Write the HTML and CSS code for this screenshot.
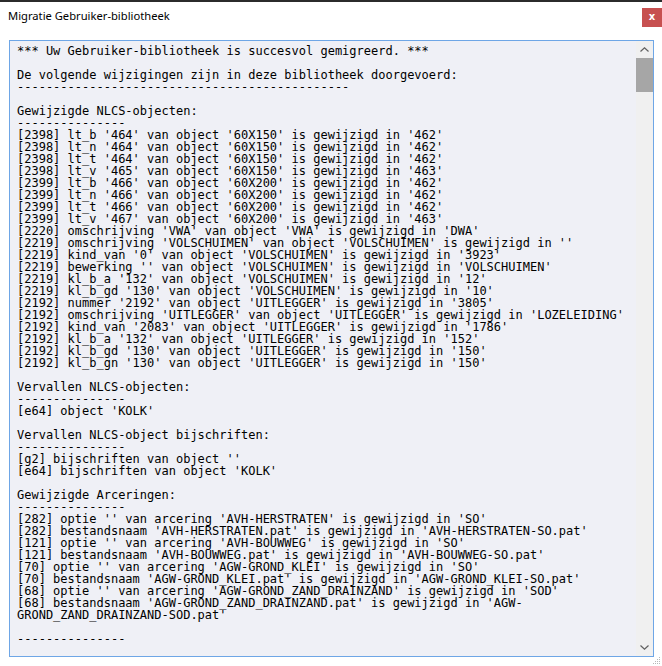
FILE: index.html
```
<!DOCTYPE html>
<html>
<head>
	<title>Migratie Gebruiker-bibliotheek</title>
	<link rel="stylesheet" href="styles.css">
</head>
<body>

	<div class="window">
		<div class="titlebar">
			<div class="title">Migratie Gebruiker-bibliotheek</div>
			<div class="close">x</div>
		</div>

		<div class="log_box">
			<pre class="log_text">*** Uw Gebruiker-bibliotheek is succesvol gemigreerd. ***

De volgende wijzigingen zijn in deze bibliotheek doorgevoerd:
----------------------------------------------

Gewijzigde NLCS-objecten:
---------------
[2398] lt_b '464' van object '60X150' is gewijzigd in '462'
[2398] lt_n '464' van object '60X150' is gewijzigd in '462'
[2398] lt_t '464' van object '60X150' is gewijzigd in '462'
[2398] lt_v '465' van object '60X150' is gewijzigd in '463'
[2399] lt_b '466' van object '60X200' is gewijzigd in '462'
[2399] lt_n '466' van object '60X200' is gewijzigd in '462'
[2399] lt_t '466' van object '60X200' is gewijzigd in '462'
[2399] lt_v '467' van object '60X200' is gewijzigd in '463'
[2220] omschrijving 'VWA' van object 'VWA' is gewijzigd in 'DWA'
[2219] omschrijving 'VOLSCHUIMEN' van object 'VOLSCHUIMEN' is gewijzigd in ''
[2219] kind_van '0' van object 'VOLSCHUIMEN' is gewijzigd in '3923'
[2219] bewerking '' van object 'VOLSCHUIMEN' is gewijzigd in 'VOLSCHUIMEN'
[2219] kl_b_a '132' van object 'VOLSCHUIMEN' is gewijzigd in '12'
[2219] kl_b_gd '130' van object 'VOLSCHUIMEN' is gewijzigd in '10'
[2192] nummer '2192' van object 'UITLEGGER' is gewijzigd in '3805'
[2192] omschrijving 'UITLEGGER' van object 'UITLEGGER' is gewijzigd in 'LOZELEIDING'
[2192] kind_van '2083' van object 'UITLEGGER' is gewijzigd in '1786'
[2192] kl_b_a '132' van object 'UITLEGGER' is gewijzigd in '152'
[2192] kl_b_gd '130' van object 'UITLEGGER' is gewijzigd in '150'
[2192] kl_b_gn '130' van object 'UITLEGGER' is gewijzigd in '150'

Vervallen NLCS-objecten:
---------------
[e64] object 'KOLK'

Vervallen NLCS-object bijschriften:
---------------
[g2] bijschriften van object ''
[e64] bijschriften van object 'KOLK'

Gewijzigde Arceringen:
---------------
[282] optie '' van arcering 'AVH-HERSTRATEN' is gewijzigd in 'SO'
[282] bestandsnaam 'AVH-HERSTRATEN.pat' is gewijzigd in 'AVH-HERSTRATEN-SO.pat'
[121] optie '' van arcering 'AVH-BOUWWEG' is gewijzigd in 'SO'
[121] bestandsnaam 'AVH-BOUWWEG.pat' is gewijzigd in 'AVH-BOUWWEG-SO.pat'
[70] optie '' van arcering 'AGW-GROND_KLEI' is gewijzigd in 'SO'
[70] bestandsnaam 'AGW-GROND_KLEI.pat' is gewijzigd in 'AGW-GROND_KLEI-SO.pat'
[68] optie '' van arcering 'AGW-GROND_ZAND_DRAINZAND' is gewijzigd in 'SOD'
[68] bestandsnaam 'AGW-GROND_ZAND_DRAINZAND.pat' is gewijzigd in 'AGW-
GROND_ZAND_DRAINZAND-SOD.pat'

---------------</pre>

			<div class="scrollbar">
				<div class="scroll_btn">
					<svg width="9" height="5" viewBox="0 0 9 5"><path d="M0.5 4.5 L4.5 0.8 L8.5 4.5" fill="none" stroke="#606060" stroke-width="1.2"/></svg>
				</div>
				<div class="scroll_track">
					<div class="scroll_thumb"></div>
				</div>
				<div class="scroll_btn">
					<svg width="9" height="5" viewBox="0 0 9 5"><path d="M0.5 0.5 L4.5 4.2 L8.5 0.5" fill="none" stroke="#606060" stroke-width="1.2"/></svg>
				</div>
			</div>
		</div>

		<svg class="grip" width="8" height="8" viewBox="0 0 8 8">
			<rect x="6" y="0" width="1" height="1" fill="#b8b8b8"/>
			<rect x="4" y="2" width="1" height="1" fill="#b8b8b8"/>
			<rect x="6" y="2" width="1" height="1" fill="#b8b8b8"/>
			<rect x="2" y="4" width="1" height="1" fill="#b8b8b8"/>
			<rect x="4" y="4" width="1" height="1" fill="#b8b8b8"/>
			<rect x="6" y="4" width="1" height="1" fill="#b8b8b8"/>
			<rect x="0" y="6" width="1" height="1" fill="#b8b8b8"/>
			<rect x="2" y="6" width="1" height="1" fill="#b8b8b8"/>
			<rect x="4" y="6" width="1" height="1" fill="#b8b8b8"/>
			<rect x="6" y="6" width="1" height="1" fill="#b8b8b8"/>
		</svg>
	</div>

</body>
</html>
```

FILE: styles.css
```
body {
	margin: 0;
	background-color: white;
}

.window {
	width: 662px;
	height: 666px;
	box-sizing: border-box;
	border-top: 2px solid #2b2b2b;
	background-color: white;
	position: relative;
	display: flex;
	flex-direction: column;
}

.titlebar {
	height: 38px;
	display: flex;
	justify-content: space-between;
	align-items: flex-start;
}

.title {
	margin-top: 6px;
	padding-left: 8px;
	font-family: "Noto Sans", sans-serif;
	font-size: 11.2px;
	color: black;
}

.close {
	margin-top: 6px;
	width: 20px;
	height: 19px;
	background-color: #c75050;
	color: white;
	font-family: "DejaVu Sans", sans-serif;
	font-weight: bold;
	font-size: 10px;
	line-height: 17px;
	text-align: center;
}

.log_box {
	margin: 0 8px 0 9px;
	height: 617px;
	box-sizing: border-box;
	border: 1px solid #6ea6e6;
	background-color: #eff0f6;
	display: flex;
}

.log_text {
	flex: 1;
	margin: 0;
	padding: 4px 0 0 7px;
	overflow: hidden;
	font-family: "DejaVu Sans Mono", monospace;
	font-size: 12px;
	line-height: 12px;
	color: black;
}

.scrollbar {
	width: 17px;
	background-color: #f0f0f0;
	display: flex;
	flex-direction: column;
}

.scroll_btn {
	height: 17px;
	display: flex;
	justify-content: center;
	align-items: center;
}

.scroll_track {
	flex: 1;
}

.scroll_thumb {
	height: 34px;
	background-color: #a6a6a6;
}

.grip {
	position: absolute;
	right: 1px;
	bottom: 1px;
}
```
